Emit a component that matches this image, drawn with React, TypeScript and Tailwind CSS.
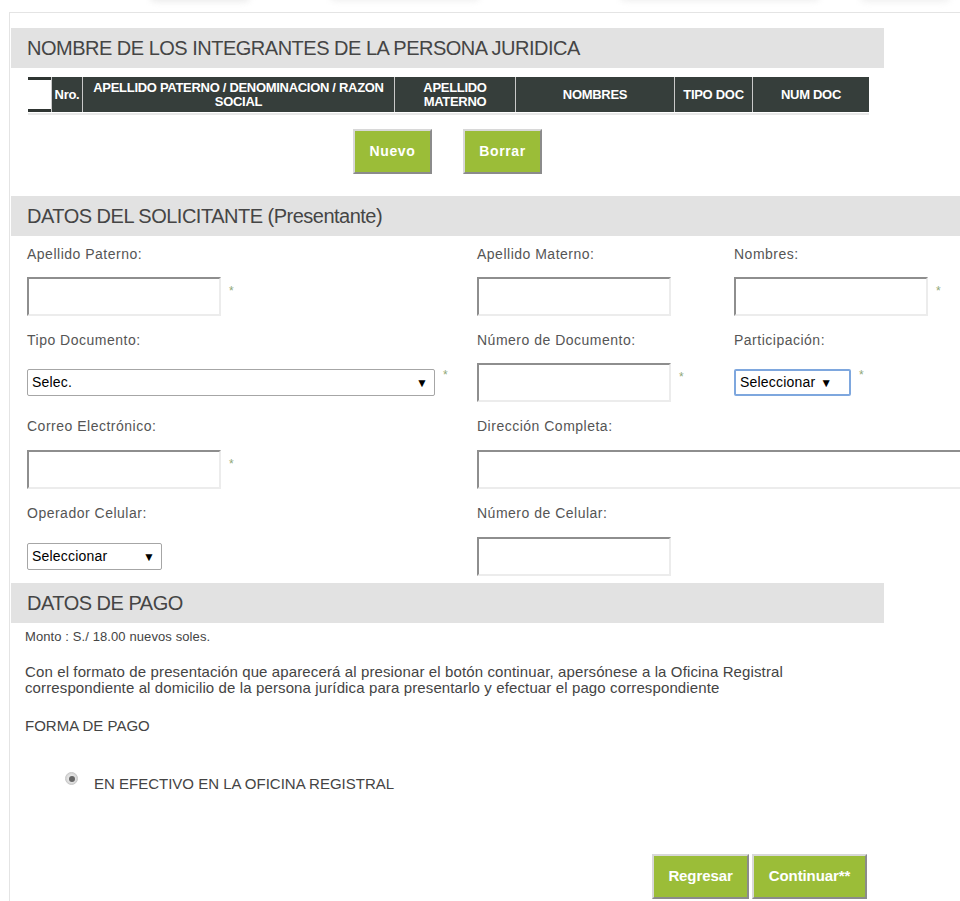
import React from "react";

const SANS = "font-['Liberation_Sans',Arial,sans-serif]";

function SectionTitle({ children, full }: { children: React.ReactNode; full?: boolean }) {
  return (
    <div
      className={`h-[40px] bg-[#e2e2e2] flex items-center pl-[16px] text-[20px] tracking-[-0.5px] text-[#454545] ${
        full ? "w-full" : "w-[873px]"
      }`}
    >
      {children}
    </div>
  );
}

function Label({ children }: { children: React.ReactNode }) {
  return <div className="h-[16px] leading-[16px] text-[14px] text-[#555] tracking-[0.5px]">{children}</div>;
}

function TextBox({ w = "w-[194px]" }: { w?: string }) {
  return (
    <div
      className={`${w} h-[39px] bg-white border-2 border-t-[#8e8e8e] border-l-[#8e8e8e] border-b-[#ececec] border-r-[#ececec]`}
    />
  );
}

function Star({ className = "mt-[5px]" }: { className?: string }) {
  return <span className={`self-start text-[12px] text-[#8fa878] ${className}`}>*</span>;
}

function SelectBox({
  text,
  w,
  focused,
  arrowGap,
}: {
  text: string;
  w: string;
  focused?: boolean;
  arrowGap?: boolean;
}) {
  return (
    <div
      className={`${w} h-[27px] bg-white rounded-[2px] flex items-center pl-[4px] pr-[6px] text-[14px] tracking-[0.2px] text-black ${
        focused ? "border-2 border-[#7ea7de]" : "border border-[#a6a6a6]"
      } ${arrowGap ? "justify-between" : "gap-[5px]"}`}
    >
      <span>{text}</span>
      <span className="text-[12px]">▼</span>
    </div>
  );
}

function GreenButton({ label, w, narrow }: { label: string; w: string; narrow?: boolean }) {
  return (
    <div
      className={`${w} h-[45px] flex items-center justify-center bg-[#9bbd38] text-white font-bold border-2 border-t-[#d8d8d8] border-l-[#d8d8d8] border-r-[#8b8b8b] border-b-[#8b8b8b] ${
        narrow ? "text-[15px] tracking-[-0.1px]" : "text-[14px] tracking-[0.6px]"
      }`}
    >
      {label}
    </div>
  );
}

const columns = [
  { w: "w-[31px]", lines: ["Nro."] },
  { w: "w-[312px]", lines: ["APELLIDO PATERNO / DENOMINACION / RAZON", "SOCIAL"] },
  { w: "w-[121px]", lines: ["APELLIDO", "MATERNO"] },
  { w: "w-[159px]", lines: ["NOMBRES"] },
  { w: "w-[78px]", lines: ["TIPO DOC"] },
  { w: "w-[117px]", lines: ["NUM DOC"] },
];

export default function App() {
  return (
    <div className={`w-[960px] h-[901px] overflow-hidden bg-white relative ${SANS}`}>
      {/* faded strip left from the banner above */}
      <div className="h-[12px] relative overflow-hidden">
        <div className="absolute left-[150px] top-[-8px] w-[100px] h-[10px] rounded-full bg-[#ececec] blur-[3px]" />
        <div className="absolute left-[330px] top-[-9px] w-[150px] h-[10px] rounded-full bg-[#efefef] blur-[3px]" />
        <div className="absolute left-[620px] top-[-9px] w-[200px] h-[10px] rounded-full bg-[#eeeeee] blur-[3px]" />
        <div className="absolute left-[860px] top-[-8px] w-[90px] h-[10px] rounded-full bg-[#f0f0f0] blur-[3px]" />
      </div>

      <div className="ml-[9px] border-l border-t border-[#e4e4e4] pl-[1px] pt-[15px] h-[900px]">
        <SectionTitle>NOMBRE DE LOS INTEGRANTES DE LA PERSONA JURIDICA</SectionTitle>

        {/* members table header */}
        <div className="mt-[9px] ml-[17px] w-[841px] border-b-2 border-[#e8e8e8] pb-[1px]">
          <div className="flex h-[35px]">
            <div className="w-[23px] border-t-[3px] border-b-[3px] border-[#2f3532] bg-white" />
            {columns.map((c, i) => (
              <div
                key={i}
                className={`${c.w} bg-[#363e3b] border-l border-[#c9c9c9] flex flex-col items-center justify-center text-white font-bold text-[13px] leading-[14px] tracking-[-0.3px] text-center`}
              >
                {c.lines.map((l) => (
                  <span key={l} className="block leading-[14px]">
                    {l}
                  </span>
                ))}
              </div>
            ))}
          </div>
        </div>

        <div className="mt-[14px] flex ml-[342px] gap-[31px]">
          <GreenButton label="Nuevo" w="w-[79px]" />
          <GreenButton label="Borrar" w="w-[79px]" />
        </div>

        <div className="mt-[22px]">
          <SectionTitle full>
            DATOS DEL SOLICITANTE <span className="ml-[5px]">(Presentante)</span>
          </SectionTitle>
        </div>

        {/* applicant form */}
        <div className="pl-[16px] pt-[10px] flex flex-col">
          <div className="grid grid-cols-[450px_257px_1fr]">
            <div className="flex flex-col gap-[15px]">
              <Label>Apellido Paterno:</Label>
              <div className="flex items-center h-[39px] gap-[8px]">
                <TextBox />
                <Star />
              </div>
            </div>
            <div className="flex flex-col gap-[15px]">
              <Label>Apellido Materno:</Label>
              <div className="flex items-center h-[39px]">
                <TextBox />
              </div>
            </div>
            <div className="flex flex-col gap-[15px]">
              <Label>Nombres:</Label>
              <div className="flex items-center h-[39px] gap-[8px]">
                <TextBox />
                <Star />
              </div>
            </div>
          </div>

          <div className="grid grid-cols-[450px_257px_1fr] mt-[16px]">
            <div className="flex flex-col gap-[15px]">
              <Label>Tipo Documento:</Label>
              <div className="flex items-center h-[39px] gap-[8px]">
                <SelectBox text="Selec." w="w-[408px]" arrowGap />
                <Star className="mt-[3px]" />
              </div>
            </div>
            <div className="flex flex-col gap-[15px]">
              <Label>Número de Documento:</Label>
              <div className="flex items-center h-[39px] gap-[8px]">
                <TextBox />
                <Star />
              </div>
            </div>
            <div className="flex flex-col gap-[15px]">
              <Label>Participación:</Label>
              <div className="flex items-center h-[39px] gap-[8px]">
                <SelectBox text="Seleccionar" w="w-[117px]" focused />
                <Star className="mt-[3px]" />
              </div>
            </div>
          </div>

          <div className="grid grid-cols-[450px_1fr] mt-[16px]">
            <div className="flex flex-col gap-[16px]">
              <Label>Correo Electrónico:</Label>
              <div className="flex items-center h-[39px] gap-[8px]">
                <TextBox />
                <Star />
              </div>
            </div>
            <div className="flex flex-col gap-[16px]">
              <Label>Dirección Completa:</Label>
              <div className="flex items-center h-[39px]">
                <TextBox w="w-[520px] shrink-0" />
              </div>
            </div>
          </div>

          <div className="grid grid-cols-[450px_1fr] mt-[16px]">
            <div className="flex flex-col gap-[16px]">
              <Label>Operador Celular:</Label>
              <div className="flex items-center h-[39px]">
                <SelectBox text="Seleccionar" w="w-[135px]" arrowGap />
              </div>
            </div>
            <div className="flex flex-col gap-[16px]">
              <Label>Número de Celular:</Label>
              <div className="flex items-center h-[39px]">
                <TextBox />
              </div>
            </div>
          </div>
        </div>

        <div className="mt-[7px]">
          <SectionTitle>DATOS DE PAGO</SectionTitle>
        </div>

        {/* payment details */}
        <div className="pl-[14px] text-[#444]">
          <p className="mt-[6px] leading-[16px] text-[13px] tracking-[0.1px]">Monto : S./ 18.00 nuevos soles.</p>
          <p className="mt-[19px] leading-[16px] w-[820px] text-[15px] tracking-[0.12px]">
            Con el formato de presentación que aparecerá al presionar el botón continuar, apersónese a la Oficina Registral
            <br />
            correspondiente al domicilio de la persona jurídica para presentarlo y efectuar el pago correspondiente
          </p>
          <p className="mt-[22px] leading-[16px] text-[15px]">FORMA DE PAGO</p>

          <div className="mt-[38px] ml-[40px] flex items-start gap-[16px]">
            <span className="w-[13px] h-[13px] rounded-full bg-[#e4e4e4] border border-[#c8c8c8] flex items-center justify-center shadow-[inset_0_0_2px_#bbb]">
              <span className="w-[6px] h-[6px] rounded-full bg-[#666]" />
            </span>
            <span className="mt-[4px] leading-[16px] text-[15px]">EN EFECTIVO EN LA OFICINA REGISTRAL</span>
          </div>

          <div className="mt-[62px] ml-[627px] flex gap-[3px]">
            <GreenButton label="Regresar" w="w-[97px]" narrow />
            <GreenButton label="Continuar**" w="w-[115px]" narrow />
          </div>
        </div>
      </div>
    </div>
  );
}
